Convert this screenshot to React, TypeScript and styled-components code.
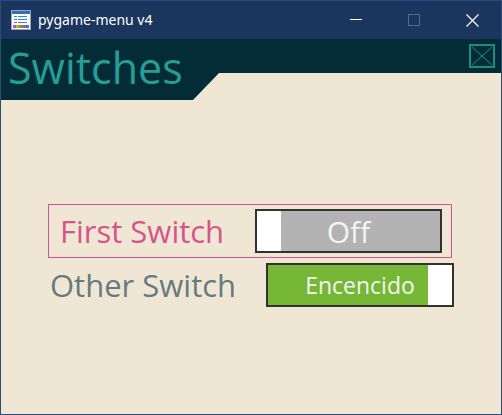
import React from "react";
import styled, { createGlobalStyle } from "styled-components";

const Global = createGlobalStyle`
  html, body { margin: 0; padding: 0; background: #efe7d3; }
  * { box-sizing: border-box; }
`;

const Window = styled.div`
  width: 502px;
  height: 415px;
  display: flex;
  flex-direction: column;
  border: 1px solid #2b4c7a;
  border-top: none;
  background: #efe7d3;
  overflow: hidden;
`;

const TitleBar = styled.div`
  height: 39px;
  flex: none;
  display: flex;
  align-items: center;
  background: #1a365e;
  border-top: 1px solid #2b4c7a;
  color: #ffffff;
`;

const AppIcon = styled.div`
  width: 20px;
  height: 20px;
  margin: 0 7px 0 10px;
  display: flex;
`;

const TitleText = styled.span`
  flex: 1;
  font-family: "Noto Sans", "Open Sans", sans-serif;
  font-size: 14px;
  line-height: 1;
  margin-top: -1px;
`;

const CaptionButton = styled.div`
  width: 58px;
  height: 38px;
  display: flex;
  align-items: center;
  justify-content: center;
`;

const MenuHeader = styled.div`
  height: 61px;
  flex: none;
  display: flex;
  align-items: flex-start;
  background: #032c37;
  clip-path: polygon(0 0, 100% 0, 100% 34px, 218px 34px, 192px 61px, 0 61px);
`;

const MenuTitle = styled.h1`
  flex: 1;
  margin: 0;
  padding: 7px 0 0 7px;
  font-family: "Open Sans", sans-serif;
  font-weight: 400;
  font-size: 43px;
  line-height: 1;
  color: #269e97;
`;

const MenuClose = styled.div`
  width: 26px;
  height: 24px;
  margin: 5px 6px 0 0;
  border: 2px solid #1f8c84;
  display: flex;
`;

const Body = styled.div`
  flex: 1;
  display: flex;
  flex-direction: column;
  align-items: flex-start;
  padding: 104px 0 0 47px;
`;

const Row = styled.div<{ $selected?: boolean; $pad: number }>`
  display: flex;
  align-items: center;
  padding: 4px 9px 4px ${(p) => p.$pad}px;
  border: 1px solid ${(p) => (p.$selected ? "#d6548b" : "transparent")};
`;

const Label = styled.span<{ $width: number; $color: string }>`
  width: ${(p) => p.$width}px;
  font-family: "Open Sans", sans-serif;
  font-size: 31px;
  line-height: 1;
  color: ${(p) => p.$color};
`;

const Switch = styled.div<{ $on?: boolean; $width: number; $small?: boolean }>`
  width: ${(p) => p.$width}px;
  height: 44px;
  border: 2px solid #323232;
  display: flex;
  align-items: center;
  justify-content: center;
  background: ${(p) =>
    p.$on
      ? "linear-gradient(to left, #ffffff 24px, #76b835 24px)"
      : "linear-gradient(to right, #ffffff 24px, #b3b3b3 24px)"};
  font-family: "Open Sans", sans-serif;
  font-size: ${(p) => (p.$small ? 23 : 30)}px;
  line-height: 1;
  color: #f4f4f4;
  padding-top: ${(p) => (p.$small ? 0 : 1)}px;
`;

export default function App() {
  return (
    <>
      <Global />
      <Window>
        <TitleBar>
          <AppIcon>
            <svg width="20" height="20" viewBox="0 0 20 20">
              <rect x="0.5" y="0.5" width="19" height="19" fill="#ffffff" stroke="#9aa7b8" />
              <rect x="1" y="1" width="18" height="3" fill="#2d6fc0" />
              <rect x="3" y="6" width="3" height="1" fill="#3a82d8" />
              <rect x="7" y="6" width="9" height="1" fill="#3a82d8" />
              <rect x="3" y="9" width="3" height="1" fill="#3a82d8" />
              <rect x="7" y="9" width="9" height="1" fill="#3a82d8" />
              <rect x="3" y="12" width="3" height="1" fill="#3a82d8" />
              <rect x="7" y="12" width="9" height="1" fill="#3a82d8" />
              <rect x="2" y="15" width="3" height="3" fill="#c84ac8" />
              <rect x="5" y="15" width="3" height="3" fill="#e0a020" />
              <rect x="8" y="15" width="3" height="3" fill="#4ab04a" />
              <rect x="11" y="15" width="3" height="3" fill="#e05050" />
              <rect x="14" y="15" width="4" height="3" fill="#5070e0" />
            </svg>
          </AppIcon>
          <TitleText>pygame-menu v4</TitleText>
          <CaptionButton>
            <svg width="12" height="12" viewBox="0 0 12 12">
              <rect x="0" y="5" width="12" height="1" fill="#ffffff" />
            </svg>
          </CaptionButton>
          <CaptionButton>
            <svg width="12" height="12" viewBox="0 0 12 12">
              <rect x="0.5" y="0.5" width="11" height="11" fill="none" stroke="#566c8e" />
            </svg>
          </CaptionButton>
          <CaptionButton>
            <svg width="13" height="13" viewBox="0 0 13 13">
              <path d="M0.5 0.5 L12.5 12.5 M12.5 0.5 L0.5 12.5" stroke="#ffffff" strokeWidth="1.2" />
            </svg>
          </CaptionButton>
        </TitleBar>
        <MenuHeader>
          <MenuTitle>Switches</MenuTitle>
          <MenuClose>
            <svg width="22" height="20" viewBox="0 0 22 20">
              <path d="M1 1 L21 19 M21 1 L1 19" stroke="#1f8c84" strokeWidth="1" />
            </svg>
          </MenuClose>
        </MenuHeader>
        <Body>
          <Row $selected $pad={11}>
            <Label $width={195} $color="#d6548b">First Switch</Label>
            <Switch $width={187}>Off</Switch>
          </Row>
          <Row $pad={1}>
            <Label $width={216} $color="#667a82">Other Switch</Label>
            <Switch $on $small $width={188}>Encencido</Switch>
          </Row>
        </Body>
      </Window>
    </>
  );
}
